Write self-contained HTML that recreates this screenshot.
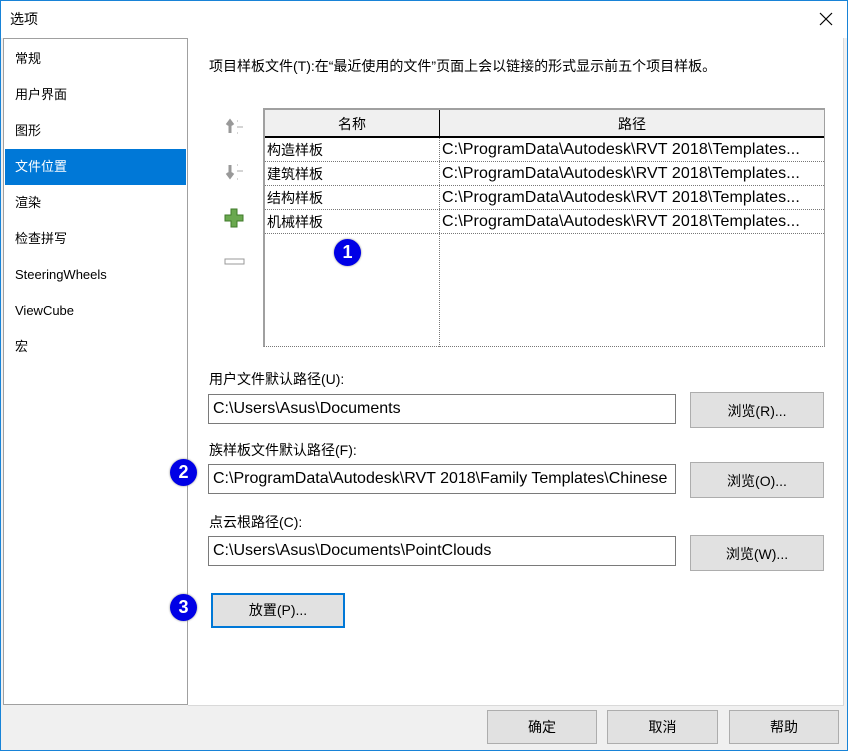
<!DOCTYPE html>
<html><head><meta charset="utf-8"><style>
*{box-sizing:border-box;margin:0;padding:0}
body{width:848px;height:751px;background:#f0f0f0;font-family:"Liberation Sans","Noto Sans CJK SC",sans-serif;font-size:14px;color:#000;position:relative;overflow:hidden}
.a{position:absolute}
.win{left:0;top:0;width:848px;height:751px;border:1px solid #1883d7}
.title{left:1px;top:1px;width:846px;height:37px;background:#fff}
.list{left:3px;top:38px;width:185px;height:667px;background:#fff;border:1px solid #a0a0a0}
.list div{position:absolute;left:1px;width:181px;height:36px;line-height:36px;padding-left:10px;font-size:13px}
.sel{background:#0078d7;color:#fff}
.panel{left:188px;top:38px;width:656px;height:668px;background:#fff;border-right:1px solid #d9d9d9;border-bottom:1px solid #d9d9d9}
.tbl{left:263px;top:108px;width:562px;height:239px;border:2px solid #a0a0a0;border-right:1px solid #a0a0a0;border-bottom:1px dotted #777;background:#fff}
.hdr{left:0;top:0;width:559px;height:28px;background:#f0f0f0;border-bottom:2px solid #000}
.cell{font-size:14px;line-height:24px;white-space:nowrap;overflow:hidden}
.p{font-size:16px;letter-spacing:0.1px}
.row{left:0;width:559px;height:24px;border-bottom:1px dotted #777}
.fld{background:#fff;border:1px solid #7a7a7a;height:30px;line-height:28px;padding-left:4px;white-space:nowrap;overflow:hidden;font-size:16px}
.btn{background:#e1e1e1;border:1px solid #adadad;text-align:center;font-size:14px}
.badge{width:27px;height:27px;border-radius:50%;background:#0000e6;color:#fff;font-weight:bold;font-size:18px;text-align:center;line-height:27px;box-shadow:0 0 2px #888}
</style></head><body>
<div class="a win"></div>
<div class="a title"></div>
<div class="a" style="left:10px;top:9px;font-size:14px">选项</div>
<svg class="a" style="left:819px;top:12px" width="14" height="14"><path d="M1 1L13 13M13 1L1 13" stroke="#000" stroke-width="1.2"/></svg>
<div class="a list">
<div style="top:2px">常规</div>
<div style="top:38px">用户界面</div>
<div style="top:74px">图形</div>
<div class="sel" style="top:110px">文件位置</div>
<div style="top:146px">渲染</div>
<div style="top:182px">检查拼写</div>
<div style="top:218px">SteeringWheels</div>
<div style="top:254px">ViewCube</div>
<div style="top:290px">宏</div>
</div>
<div class="a panel"></div>
<div class="a" style="left:209px;top:56px;font-size:14px">项目样板文件(T):在“最近使用的文件”页面上会以链接的形式显示前五个项目样板。</div>
<svg class="a" style="left:224px;top:118px" width="24" height="160">
<path d="M6 15V4M3 7L6 3L9 7" stroke="#999" stroke-width="3" fill="none"/><path d="M13 9h6M13 3h1M13 15h1" stroke="#aaa" stroke-width="1"/>
<path d="M6 47V58M3 55L6 59L9 55" stroke="#999" stroke-width="3" fill="none"/><path d="M13 53h6M13 47h1M13 61h1" stroke="#aaa" stroke-width="1"/>
<path d="M7 91h6v6h6v6h-6v6h-6v-6h-6v-6h6z" fill="#6aa84f" stroke="#3f7a2a"/>
<rect x="1" y="141" width="19" height="5" fill="#fff" stroke="#999"/>
</svg>
<div class="a tbl">
<div class="a hdr"><div class="a cell" style="left:0;width:174px;text-align:center;line-height:28px">名称</div><div class="a" style="left:174px;top:0;height:28px;border-left:1px solid #000"></div><div class="a cell" style="left:175px;width:384px;text-align:center;line-height:28px">路径</div></div>
<div class="a" style="left:174px;top:28px;height:209px;border-left:1px dotted #777"></div>
<div class="a row" style="top:28px"><span class="a cell" style="left:2px">构造样板</span><span class="a cell p" style="left:177px">C:\ProgramData\Autodesk\RVT 2018\Templates...</span></div>
<div class="a row" style="top:52px"><span class="a cell" style="left:2px">建筑样板</span><span class="a cell p" style="left:177px">C:\ProgramData\Autodesk\RVT 2018\Templates...</span></div>
<div class="a row" style="top:76px"><span class="a cell" style="left:2px">结构样板</span><span class="a cell p" style="left:177px">C:\ProgramData\Autodesk\RVT 2018\Templates...</span></div>
<div class="a row" style="top:100px"><span class="a cell" style="left:2px">机械样板</span><span class="a cell p" style="left:177px">C:\ProgramData\Autodesk\RVT 2018\Templates...</span></div>
</div>
<div class="a badge" style="left:334px;top:239px">1</div>
<div class="a" style="left:209px;top:369px">用户文件默认路径(U):</div>
<div class="a fld" style="left:208px;top:394px;width:468px">C:\Users\Asus\Documents</div>
<div class="a btn" style="left:690px;top:392px;width:134px;height:36px;line-height:36px">浏览(R)...</div>
<div class="a" style="left:209px;top:440px">族样板文件默认路径(F):</div>
<div class="a fld" style="left:208px;top:464px;width:468px">C:\ProgramData\Autodesk\RVT 2018\Family Templates\Chinese</div>
<div class="a btn" style="left:690px;top:462px;width:134px;height:36px;line-height:36px">浏览(O)...</div>
<div class="a badge" style="left:170px;top:459px">2</div>
<div class="a" style="left:209px;top:512px">点云根路径(C):</div>
<div class="a fld" style="left:208px;top:536px;width:468px">C:\Users\Asus\Documents\PointClouds</div>
<div class="a btn" style="left:690px;top:535px;width:134px;height:36px;line-height:36px">浏览(W)...</div>
<div class="a btn" style="left:211px;top:593px;width:134px;height:35px;line-height:31px;border:2px solid #0078d7">放置(P)...</div>
<div class="a badge" style="left:170px;top:594px">3</div>
<div class="a btn" style="left:487px;top:710px;width:110px;height:34px;line-height:32px">确定</div>
<div class="a btn" style="left:607px;top:710px;width:111px;height:34px;line-height:32px">取消</div>
<div class="a btn" style="left:729px;top:710px;width:110px;height:34px;line-height:32px">帮助</div>
</body></html>
